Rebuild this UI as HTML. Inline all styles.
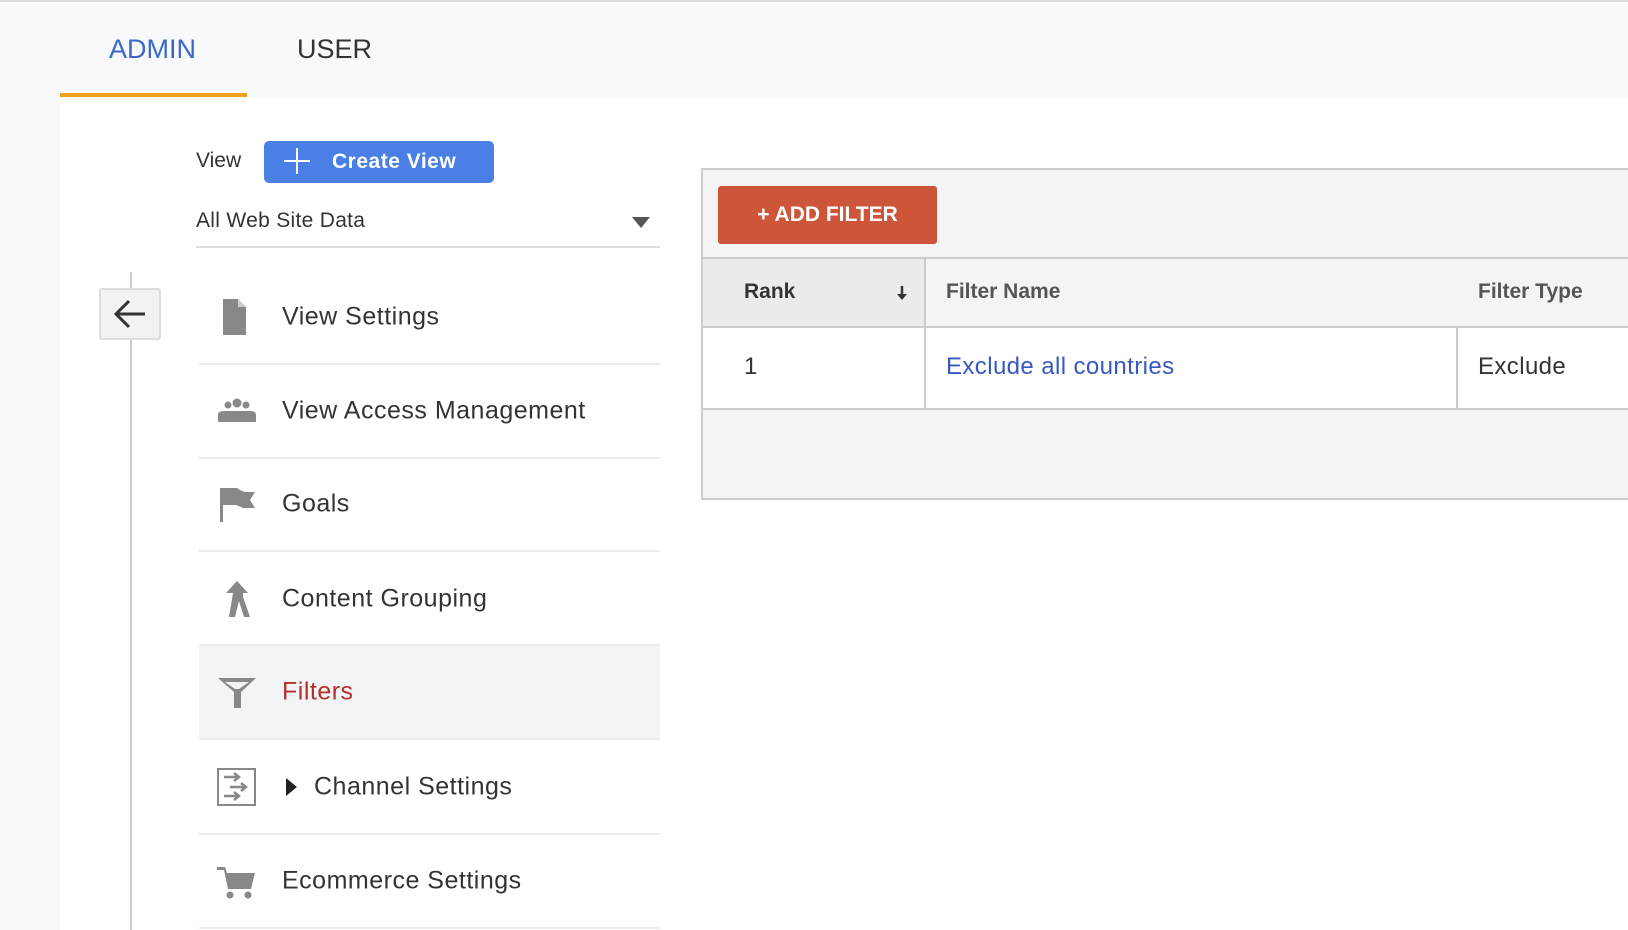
<!DOCTYPE html>
<html><head><style>
*{margin:0;padding:0;box-sizing:border-box}
body{width:1628px;height:930px;overflow:hidden;background:#f8f9fa;font-family:"Liberation Sans",Arial,sans-serif;position:relative;color:#333}
.a{position:absolute}
.row{position:absolute;left:199px;width:461px;border-bottom:2px solid #ececec}
.lbl{position:absolute;left:282px;font-size:25px;color:#333;transform:translateY(-50%);letter-spacing:0.5px}
.ic{position:absolute;left:215px;transform:translateY(-50%)}
</style></head><body>
<div class="a" style="left:0;top:0;width:1628px;height:2px;background:#dcdcdc"></div>
<div class="a" style="left:109px;top:34px;font-size:27px;color:#3a67c9">ADMIN</div>
<div class="a" style="left:297px;top:34px;font-size:27px;color:#333">USER</div>
<div class="a" style="left:60px;top:97px;width:1568px;height:833px;background:#fff"></div>
<div class="a" style="left:60px;top:93px;width:187px;height:4px;background:#f0a21f"></div>

<div class="a" style="left:196px;top:149px;font-size:21px;color:#333">View</div>
<div class="a" style="left:264px;top:141px;width:230px;height:42px;background:#4a7fe6;border-radius:5px;color:#fff;font-size:21px;font-weight:bold">
<div class="a" style="left:20px;top:19px;width:26px;height:2px;background:#fff"></div>
<div class="a" style="left:32px;top:7px;width:2px;height:26px;background:#fff"></div>
<div class="a" style="left:68px;top:9px;letter-spacing:0.5px">Create View</div></div>
<div class="a" style="left:196px;top:209px;font-size:21px;color:#333;letter-spacing:0.3px">All Web Site Data</div>
<div class="a" style="left:632px;top:217px;border-left:9px solid transparent;border-right:9px solid transparent;border-top:11px solid #555"></div>
<div class="a" style="left:196px;top:246px;width:464px;height:2px;background:#ddd"></div>

<div class="a" style="left:130px;top:272px;width:2px;height:658px;background:#ccc"></div>
<div class="a" style="left:99px;top:288px;width:62px;height:52px;background:#f2f2f2;border:2px solid #ddd;border-radius:3px">
<svg width="58" height="48" viewBox="0 0 58 48"><path d="M44 24H16M28 11L15 24L28 37" stroke="#333" stroke-width="3" fill="none"/></svg></div>

<div class="row" style="top:270px;height:95px"></div>
<div class="row" style="top:365px;height:94px"></div>
<div class="row" style="top:459px;height:93px"></div>
<div class="row" style="top:552px;height:94px"></div>
<div class="row" style="top:646px;height:94px;background:#f3f4f5"></div>
<div class="row" style="top:740px;height:95px"></div>
<div class="row" style="top:835px;height:94px"></div>

<svg class="ic" style="top:317px" width="44" height="40" viewBox="0 0 44 40"><path d="M8 2H23L31 10V38H8Z" fill="#888"/><path d="M23 2V10H31" fill="#ccc"/></svg>
<div class="lbl" style="top:317px">View Settings</div>
<svg class="ic" style="top:411px" width="44" height="40" viewBox="0 0 44 40"><circle cx="13" cy="14" r="3.5" fill="#888"/><circle cx="22" cy="12" r="4.5" fill="#888"/><circle cx="31" cy="14" r="3.5" fill="#888"/><path d="M3 31V24Q3 20 9 20H35Q41 20 41 24V31Z" fill="#888"/></svg>
<div class="lbl" style="top:411px">View Access Management</div>
<svg class="ic" style="top:504px" width="44" height="40" viewBox="0 0 44 40"><path d="M5 4V38H8V4Z" fill="#888"/><path d="M8 4H22Q26 7 30 8H40L35 16L40 24H28Q24 22 21 21H8Z" fill="#888"/></svg>
<div class="lbl" style="top:504px">Goals</div>
<svg class="ic" style="top:599px" width="44" height="40" viewBox="0 0 44 40"><path d="M22 2L11 14H18L14 38H20L24 22L29 38H35L28 18L28 14H33Z" fill="#888"/></svg>
<div class="lbl" style="top:599px">Content Grouping</div>
<svg class="ic" style="top:692px" width="44" height="40" viewBox="0 0 44 40"><path d="M3 6H41L26 20V36H19V20Z" fill="#888"/><path d="M10 10H34L24 17H20Z" fill="#f3f4f5"/></svg>
<div class="lbl" style="top:692px;color:#b5302a">Filters</div>
<svg class="ic" style="top:787px" width="44" height="40" viewBox="0 0 44 40"><rect x="3" y="2" width="37" height="36" fill="none" stroke="#888" stroke-width="2"/><path d="M9 10H24M19 6L24 10L19 14M15 20H31M26 16L31 20L26 24M9 29H24M19 25L24 29L19 33" stroke="#888" stroke-width="2.5" fill="none"/></svg>
<div class="a" style="left:286px;top:778px;border-top:9px solid transparent;border-bottom:9px solid transparent;border-left:11px solid #222"></div>
<div class="lbl" style="top:787px;left:314px">Channel Settings</div>
<svg class="ic" style="top:881px" width="44" height="40" viewBox="0 0 44 40"><path d="M2 6H10L12 12H40L36 28H13L9 9H2Z" fill="#888"/><circle cx="15" cy="34" r="3.5" fill="#888"/><circle cx="33" cy="34" r="3.5" fill="#888"/></svg>
<div class="lbl" style="top:881px">Ecommerce Settings</div>

<div class="a" style="left:701px;top:168px;width:940px;height:332px;background:#f4f4f4;border:2px solid #ccc"></div>
<div class="a" style="left:718px;top:186px;width:219px;height:58px;background:#cc553a;border-radius:3px;color:#fff;font-weight:bold;font-size:21px;text-align:center;line-height:58px">+ ADD FILTER</div>
<div class="a" style="left:703px;top:257px;width:925px;height:2px;background:#ccc"></div>
<div class="a" style="left:703px;top:259px;width:222px;height:68px;background:#ebebeb"></div>
<div class="a" style="left:924px;top:259px;width:2px;height:150px;background:#ccc"></div>
<div class="a" style="left:744px;top:280px;font-size:21px;font-weight:bold;color:#333">Rank</div>
<svg class="a" style="left:896px;top:285px" width="12" height="16" viewBox="0 0 12 16"><path d="M6 1V11" stroke="#333" stroke-width="2.5"/><path d="M1 9H11L6 15Z" fill="#333"/></svg>
<div class="a" style="left:946px;top:280px;font-size:21px;font-weight:bold;color:#555">Filter Name</div>
<div class="a" style="left:1478px;top:280px;font-size:21px;font-weight:bold;color:#555">Filter Type</div>
<div class="a" style="left:703px;top:326px;width:925px;height:2px;background:#ccc"></div>
<div class="a" style="left:703px;top:328px;width:925px;height:80px;background:#fff"></div>
<div class="a" style="left:924px;top:328px;width:2px;height:80px;background:#ccc"></div>
<div class="a" style="left:1456px;top:328px;width:2px;height:80px;background:#ccc"></div>
<div class="a" style="left:744px;top:353px;font-size:24px;color:#333">1</div>
<div class="a" style="left:946px;top:353px;font-size:24px;color:#3559c0;letter-spacing:0.4px">Exclude all countries</div>
<div class="a" style="left:1478px;top:353px;font-size:24px;color:#333;letter-spacing:0.4px">Exclude</div>
<div class="a" style="left:703px;top:408px;width:925px;height:2px;background:#ccc"></div>
</body></html>
